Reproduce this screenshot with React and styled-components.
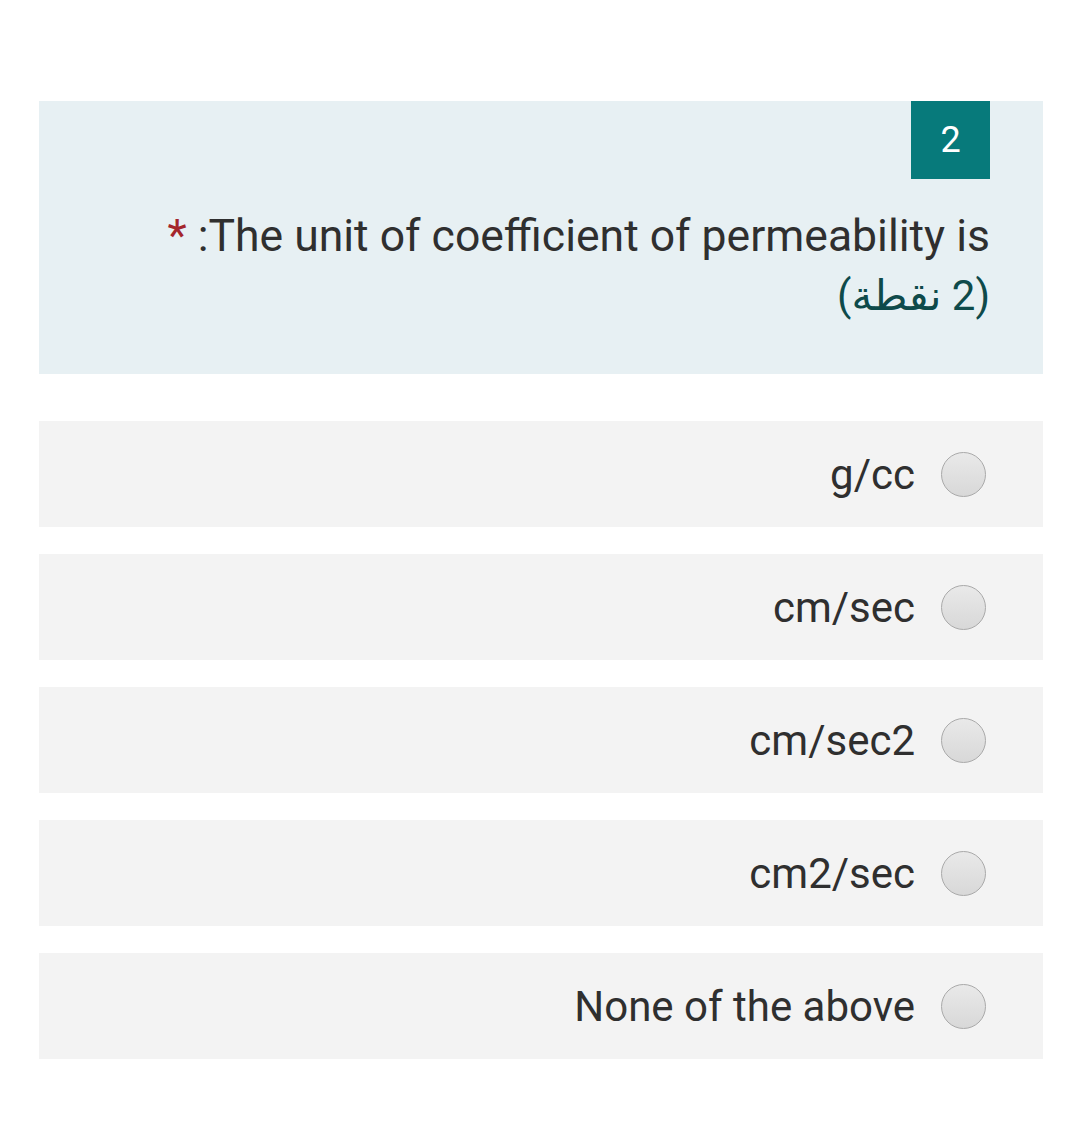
import React from 'react';
import styled, { createGlobalStyle } from 'styled-components';

const GlobalStyle = createGlobalStyle`
  body {
    margin: 0;
    background: #ffffff;
    font-family: Roboto, "DejaVu Sans", sans-serif;
  }
`;

const options = ["g/cc", "cm/sec", "cm/sec2", "cm2/sec", "None of the above"];

export default function App() {
  return <Page dir="rtl">
    <GlobalStyle />
    <QuestionPanel>
      <Badge>2</Badge>
      <QuestionText>
        The unit of coefficient of permeability is: <Star>*</Star>
      </QuestionText>
      <Points>(2 نقطة)</Points>
    </QuestionPanel>
    <OptionList>
      {
        options.map(o => <OptionRow key={o}>
          <Radio />
          <OptionLabel>{o}</OptionLabel>
        </OptionRow>)
      }
    </OptionList>
  </Page>
}

const Page = styled.div`
  width: 1004px;
  padding: 101px 0 0 39px;
`

const QuestionPanel = styled.div`
  background-color: #e7f0f3;
  padding: 0 53px 48px 0;
  display: flex;
  flex-direction: column;
  align-items: flex-start;
`

const Badge = styled.div`
  width: 79px;
  height: 78px;
  background-color: #077a7b;
  color: #ffffff;
  font-size: 36px;
  display: flex;
  justify-content: center;
  align-items: center;
  margin-bottom: 27px;
`

const QuestionText = styled.div`
  font-size: 44.5px;
  line-height: 60px;
  color: #2f2f2f;
`

const Star = styled.span`
  color: #a4262c;
`

const Points = styled.div`
  font-size: 42px;
  line-height: 60px;
  color: #0e4a4a;
`

const OptionList = styled.div`
  margin-top: 47px;
  display: flex;
  flex-direction: column;
  gap: 27px;
`

const OptionRow = styled.div`
  height: 106px;
  background-color: #f3f3f3;
  display: flex;
  align-items: center;
  gap: 26px;
  padding-right: 57px;
`

const Radio = styled.span`
  width: 43px;
  height: 43px;
  border-radius: 50%;
  border: 1.5px solid #a9a9a9;
  background: linear-gradient(#e9e9e9, #d8d8d8);
  flex-shrink: 0;
`

const OptionLabel = styled.span`
  font-size: 42px;
  color: #2f2f2f;
`
